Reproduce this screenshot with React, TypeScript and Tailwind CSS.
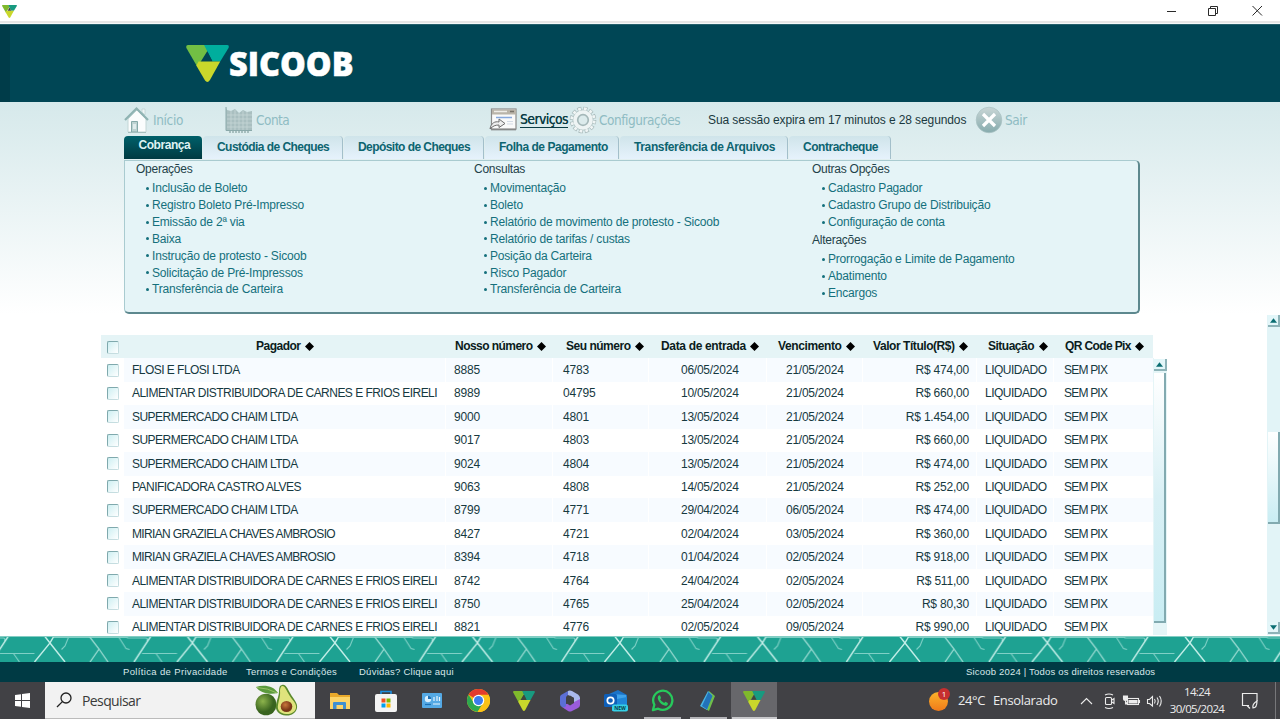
import type { ReactNode } from 'react';

const tabs = [
  { label: 'Custódia de Cheques', cls: 'w-[140px] tracking-[-0.55px]' },
  { label: 'Depósito de Cheques', cls: 'w-[140px] tracking-[-0.56px]' },
  { label: 'Folha de Pagamento', cls: 'w-[134px] tracking-[-0.47px]' },
  { label: 'Transferência de Arquivos', cls: 'w-[168px] tracking-[-0.37px]' },
  { label: 'Contracheque', cls: 'w-[102px] tracking-[-0.47px]' },
];

const operacoes = [
  'Inclusão de Boleto',
  'Registro Boleto Pré-Impresso',
  'Emissão de 2ª via',
  'Baixa',
  'Instrução de protesto - Sicoob',
  'Solicitação de Pré-Impressos',
  'Transferência de Carteira',
];
const consultas = [
  'Movimentação',
  'Boleto',
  'Relatório de movimento de protesto - Sicoob',
  'Relatório de tarifas / custas',
  'Posição da Carteira',
  'Risco Pagador',
  'Transferência de Carteira',
];
const outras = ['Cadastro Pagador', 'Cadastro Grupo de Distribuição', 'Configuração de conta'];
const alteracoes = ['Prorrogação e Limite de Pagamento', 'Abatimento', 'Encargos'];

const headers = [
  { label: 'Pagador', cls: 'pl-[132px] tracking-[-0.5px]' },
  { label: 'Nosso número', cls: 'pl-[9px] tracking-[-0.54px]' },
  { label: 'Seu número', cls: 'pl-[13px] tracking-[-0.48px]' },
  { label: 'Data de entrada', cls: 'pl-[12px] tracking-[-0.34px]' },
  { label: 'Vencimento', cls: 'pl-[11px] tracking-[-0.38px]' },
  { label: 'Valor Título(R$)', cls: 'pl-[10px] tracking-[-0.44px]' },
  { label: 'Situação', cls: 'pl-[11px] tracking-[-0.5px]' },
  { label: 'QR Code Pix', cls: 'pl-[11px] tracking-[-0.63px]' },
];

const rows = [
  ['FLOSI E FLOSI LTDA', '8885', '4783', '06/05/2024', '21/05/2024', 'R$ 474,00'],
  ['ALIMENTAR DISTRIBUIDORA DE CARNES E FRIOS EIRELI', '8989', '04795', '10/05/2024', '21/05/2024', 'R$ 660,00'],
  ['SUPERMERCADO CHAIM LTDA', '9000', '4801', '13/05/2024', '21/05/2024', 'R$ 1.454,00'],
  ['SUPERMERCADO CHAIM LTDA', '9017', '4803', '13/05/2024', '21/05/2024', 'R$ 660,00'],
  ['SUPERMERCADO CHAIM LTDA', '9024', '4804', '13/05/2024', '21/05/2024', 'R$ 474,00'],
  ['PANIFICADORA CASTRO ALVES', '9063', '4808', '14/05/2024', '21/05/2024', 'R$ 252,00'],
  ['SUPERMERCADO CHAIM LTDA', '8799', '4771', '29/04/2024', '06/05/2024', 'R$ 474,00'],
  ['MIRIAN GRAZIELA CHAVES AMBROSIO', '8427', '4721', '02/04/2024', '03/05/2024', 'R$ 360,00'],
  ['MIRIAN GRAZIELA CHAVES AMBROSIO', '8394', '4718', '01/04/2024', '02/05/2024', 'R$ 918,00'],
  ['ALIMENTAR DISTRIBUIDORA DE CARNES E FRIOS EIRELI', '8742', '4764', '24/04/2024', '02/05/2024', 'R$ 511,00'],
  ['ALIMENTAR DISTRIBUIDORA DE CARNES E FRIOS EIRELI', '8750', '4765', '25/04/2024', '02/05/2024', 'R$ 80,30'],
  ['ALIMENTAR DISTRIBUIDORA DE CARNES E FRIOS EIRELI', '8821', '4776', '02/05/2024', '09/05/2024', 'R$ 990,00'],
];

const gridCols = 'grid grid-cols-[23px_322px_107px_96px_118px_96px_114px_77px_99px]';

function Mark({ className, soft }: { className: string; soft?: boolean }) {
  return (
    <svg viewBox="0 0 44 38" className={className} preserveAspectRatio="none">
      <path d="M2 0H19.500L22 6 12 22 10.800 21 0.400 3Q-.4 0 2 0Z" fill={soft ? '#7fb92c' : '#72bf44'} />
      <path d="M18.500 0H42Q44.600 0 43.500 3L35 17H27L22 7Z" fill={soft ? '#189a80' : '#00ae9d'} />
      <path d="M12.800 17H35L24.500 36Q22 39.500 19.500 36.500L10.500 21Z" fill="#c9d72b" />
      <path d="M22 7L27 16.500H16.500Z" fill={soft ? '#40483a' : '#004655'} />
    </svg>
  );
}

function Check() {
  return (
    <span className="block h-[13px] w-3 rounded-[2px] border border-[#c5dde0] border-t-[#7fa9ad] border-l-[#7fa9ad] bg-linear-to-br from-[#cdeff2] to-white" />
  );
}

function Menu({ title, items }: { title: string; items: string[] }) {
  return (
    <div>
      <div className="h-[18px] leading-[17px] tracking-[-0.25px] text-[#1f4249]">{title}</div>
      <ul className="pt-px pl-[10px] text-[#14707c]">
        {items.map((i) => (
          <li key={i} className="flex h-[16.85px] items-center whitespace-nowrap">
            <span className="mr-[3px] size-[3px] rounded-full bg-[#14707c]" />
            <span className="leading-[16px] tracking-[-0.19px]">{i}</span>
          </li>
        ))}
      </ul>
    </div>
  );
}

function Arrow({ down }: { down?: boolean }) {
  return (
    <div className="flex h-[12px] w-full shrink-0 items-center justify-center border-r-2 border-b-2 border-[#8db3b8] bg-[#e3f6f9]">
      <svg viewBox="0 0 6 4" className="h-[5px] w-[7px]">
        <path d={down ? 'M0 0H6L3 4Z' : 'M0 4H6L3 0Z'} fill="#0b6d72" />
      </svg>
    </div>
  );
}

function Pattern() {
  return (
    <svg className="block h-[26px] w-full shrink-0" viewBox="0 0 1280 26">
      <defs>
        <pattern id="tri" width="142.5" height="26" x="50" patternUnits="userSpaceOnUse">
          <rect width="143" height="26" fill="#1ea292" />
          <g fill="none" stroke="#7fd0c6" strokeWidth="1.100">
            <path d="M4 1.500H17M19 0 15 10 11.500 13.500M68 0 76 12.500 79.500 13.500M77 2H96Q98 2 97 5M92 17.500H127M106 17.500 112 26M17 1.500H78" />
          </g>
          <g fill="none" stroke="#c3eee8" strokeWidth="1.400">
            <path d="M0 7 15 26M142.500 7 127 26M0 7 4 0M142.500 7 137 0M101 0 84 26" />
          </g>
          <path d="M39 0 49 13 40 26M49 13 58 26" fill="none" stroke="#98dad1" strokeWidth="1.300" />
        </pattern>
      </defs>
      <rect width="1280" height="26" fill="url(#tri)" />
      <path d="M0 .5H1280" stroke="#83cdc3" />
    </svg>
  );
}

function HouseIcon() {
  return (
    <svg viewBox="0 0 26 28" className="h-7 w-[26px]">
      <path d="M4 13 13 4 22 13V26H4Z" fill="#fbfdfd" stroke="#c3d6d6" />
      <path d="M18 3h3v6l-3-3z" fill="#eef5f5" stroke="#b9cfcf" strokeWidth=".7" />
      <path d="M1 14 12.500 2.500 24 14" fill="none" stroke="#8fb3b2" strokeWidth="2.200" />
      <path d="M7.500 15.500h6V26h-6z" fill="#bdd2d1" stroke="#86a9a8" />
      <path d="M9 18h3v5H9z" fill="#e0ecec" />
      <path d="M4 26.500h18" stroke="#a5bfbe" />
    </svg>
  );
}

function ChartIcon() {
  return (
    <svg viewBox="0 0 28 28" className="h-7 w-7">
      <path d="M1 1V24H27V5L22 6 18 4 14 7 10 3 6 5 2 4Z" fill="#a9bfc0" />
      <path d="M2 9H27M2 13H27M2 17H27M2 21H27M6 5V24M10 4V24M14 7V24M18 5V24M22 6V24" stroke="#c7d7d7" strokeWidth=".8" />
      <path d="M1 1V24.500H27" stroke="#8aa9aa" fill="none" />
      <path d="M5 25v2M8 25v2M11 25v2M14 25v2M17 25v2M20 25v2M23 25v2" stroke="#94afaf" strokeWidth="1.500" />
    </svg>
  );
}

function ServiceIcon() {
  return (
    <svg viewBox="0 0 28 23" className="h-[23px] w-7">
      <rect x="2.500" y="1" width="24.500" height="20" fill="#fafafa" stroke="#8b8b8b" strokeWidth="1.200" />
      <path d="M3 1.500h24v5H3z" fill="#b9b4a9" />
      <path d="M5 3.500h13" stroke="#efede8" strokeWidth="1.500" />
      <path d="M21 3.500h4" stroke="#77736a" strokeWidth="1.500" />
      <path d="M7 9.500h16" stroke="#86a8dd" strokeWidth="1.500" />
      <path d="M18 13.500h6M18 16h6" stroke="#d3dbe6" />
      <path d="M1 21C2 15 6 13 10 14V11L16 15.500 10 19.500V17C6 17 4 18 1 21Z" fill="#eee" stroke="#6e6e6e" />
      <path d="M2 21.800h25" stroke="#777" />
    </svg>
  );
}

function GearIcon() {
  return (
    <svg viewBox="0 0 28 28" className="h-7 w-7">
      <circle cx="14" cy="14" r="11.300" fill="none" stroke="#a3b6b7" strokeWidth="4" strokeDasharray="4 1.917" />
      <circle cx="14" cy="14" r="10.200" fill="#eef4f4" stroke="#a9bcbd" strokeWidth=".8" />
      <circle cx="14" cy="14" r="11.300" fill="none" stroke="#f0f5f5" strokeWidth="2.800" strokeDasharray="2.800 3.117" strokeDashoffset="-.6" />
      <circle cx="14" cy="14" r="5.300" fill="#dcebec" stroke="#a5b8b9" strokeWidth="1.700" />
    </svg>
  );
}

function ExitIcon() {
  return (
    <svg viewBox="0 0 28 28" className="h-7 w-7">
      <defs>
        <linearGradient id="ex" x1="0" y1="0" x2="0" y2="1">
          <stop offset="0" stopColor="#c9d6d6" />
          <stop offset="1" stopColor="#86abad" />
        </linearGradient>
      </defs>
      <circle cx="14" cy="14" r="12.800" fill="url(#ex)" stroke="#a9c2c3" strokeWidth=".7" />
      <path d="M8 8 20 20M20 8 8 20" stroke="#fff" strokeWidth="3.200" />
    </svg>
  );
}

function NavLink({ icon, label, cls, text }: { icon: ReactNode; label: string; cls: string; text: string }) {
  return (
    <div className={`flex shrink-0 items-center ${cls}`}>
      {icon}
      <span className={`font-['DejaVu_Sans_Condensed','DejaVu_Sans',sans-serif] text-[13.5px] leading-4 [font-stretch:condensed] ${text}`}>{label}</span>
    </div>
  );
}

function Avocado() {
  return (
    <svg viewBox="0 0 44 32" className="h-8 w-11">
      <defs>
        <radialGradient id="av" cx=".35" cy=".35">
          <stop offset="0" stopColor="#8db44c" />
          <stop offset="1" stopColor="#39631f" />
        </radialGradient>
        <radialGradient id="pit" cx=".4" cy=".35">
          <stop offset="0" stopColor="#c9773b" />
          <stop offset="1" stopColor="#7a3717" />
        </radialGradient>
      </defs>
      <ellipse cx="11" cy="20.500" rx="10.500" ry="10.800" fill="url(#av)" />
      <path d="M1 3C9 0 19 2 23 9 14 11 5 9 1 3Z" fill="#5c9a3d" />
      <path d="M2 3.500Q13 4 22 9" stroke="#a6cc6e" fill="none" strokeWidth=".8" />
      <path d="M27 1C31 0 32 4 35 9 39 16 43 19 42 24 41 29 36 32 31 31.500 24 31 20 27 21 21 22 15 24 12 24 7 24 3 25 1 27 1Z" fill="#5c8a2c" />
      <path d="M27.500 2C30 2 31 6 34.500 11.500 38 17 42 20 41 24 40 28.500 35 30.500 31 30 25 29.500 22 26 23 21 24 15 25.500 12 25 7 25 4 26 2 27.500 2Z" fill="#dfe37c" />
      <ellipse cx="31.500" cy="22.500" rx="5.800" ry="5.500" fill="url(#pit)" />
    </svg>
  );
}

function TaskSlot({ children, active, open }: { children: ReactNode; active?: boolean; open?: boolean }) {
  return (
    <div className={`flex h-full w-[46px] shrink-0 flex-col items-center ${active ? 'bg-[#67676b]' : ''}`}>
      <div className="flex h-[35px] w-full items-center justify-center pt-[2px]">{children}</div>
      <div className={`mt-auto h-[2px] ${active ? 'w-[45px] bg-[#c9c9cc]' : open ? 'w-[37px] bg-[#b4b4b8]' : 'w-0'}`} />
    </div>
  );
}

export default function App() {
  return (
    <div className="flex h-[719px] w-[1280px] flex-col overflow-hidden bg-white font-['Liberation_Sans',Arial,sans-serif] text-[12px]">
      <div className="flex h-[21px] shrink-0 items-center justify-between pr-[16px] pl-[2px]">
        <Mark soft className="mt-px h-[13px] w-[15px]" />
        <svg viewBox="0 0 98 12" className="h-3 w-[98px]" fill="none" stroke="#2a2a2a" strokeWidth="1">
          <path d="M1 6.500H10M86.500 1 96 10.500M96 1 86.500 10.500" />
          <path d="M42.500 3.500H49.500V10.500H42.500ZM44.500 3V1.500H51.500V8.500H50" />
        </svg>
      </div>
      <div className="h-[3px] shrink-0 border-t-2 border-[#e6e6e6] bg-[#f5f9fa]" />
      <header className="flex h-[78px] shrink-0 border-t border-[#25606c] bg-[#004655]">
        <div className="w-[10px] bg-[#003c49]" />
        <div className="pt-5 pl-[176px]">
          <Mark className="h-[37px] w-[43px]" />
        </div>
        <svg className="h-[60px] w-[132px]" viewBox="0 0 132 60">
          <text x="0" y="50.800" textLength="124.500" lengthAdjust="spacingAndGlyphs" fill="#fff" stroke="#fff" strokeWidth=".5" className="font-['Open_Sans',sans-serif] text-[34px] font-extrabold">SICOOB</text>
        </svg>
      </header>

      <main className="flex h-[534px] shrink-0 justify-between bg-linear-to-b from-[#d6e9eb] to-white to-[212px]">
        <div className="w-[1168px]">
          <nav className="flex h-[34px] items-center pt-px pl-[124px]">
            <NavLink icon={<HouseIcon />} label="Início" cls="w-[101px] gap-[3px]" text="text-[#8fbcc3] tracking-[-0.35px]" />
            <NavLink icon={<ChartIcon />} label="Conta" cls="w-[264px] gap-[3px]" text="text-[#8fbcc3] tracking-[-0.5px]" />
            <NavLink icon={<ServiceIcon />} label="Serviços" cls="w-[80px] gap-[3px]" text="text-[#0a3c44] tracking-[-0.4px] border-b border-[#0a3c44] [text-shadow:0.3px_0_0_#0a3c44]" />
            <NavLink icon={<GearIcon />} label="Configurações" cls="w-[139px] gap-[2px]" text="text-[#8fbcc3] tracking-[-0.45px]" />
            <div className="w-[267px] shrink-0 whitespace-nowrap tracking-[-0.1px] text-[#1a3940]">Sua sessão expira em 17 minutos e 28 segundos</div>
            <NavLink icon={<ExitIcon />} label="Sair" cls="gap-[2px]" text="text-[#8fbcc3] tracking-[-0.4px]" />
          </nav>

          <div className="flex h-[24px] gap-[1px] pl-[124px] font-bold text-[#0d6470]">
            <div className="h-[23px] w-[78px] rounded-t-[4px] bg-linear-to-b from-[#00606a] to-[#003a42] pl-[14.5px] leading-[19px] tracking-[-0.45px] text-[#dff2f3]">
              Cobrança
            </div>
            {tabs.map((t) => (
              <div key={t.label} className={`h-[23px] shrink-0 rounded-t-[4px] border-r border-[#a3bfca] bg-linear-to-b from-[#cfe4ea] to-[#e6f2fc] pl-[14px] leading-[22px] whitespace-nowrap ${t.cls}`}>
                {t.label}
              </div>
            ))}
          </div>

          <section className="ml-[124px] grid h-[154px] w-[1016px] grid-cols-[338px_338px_1fr] rounded-r-[5px] rounded-bl-[5px] border border-r-2 border-b-2 border-[#a9cbd0] border-r-[#5d888e] border-b-[#5d888e] bg-[#e5f4f7] pt-0 pl-[11px]">
            <Menu title="Operações" items={operacoes} />
            <Menu title="Consultas" items={consultas} />
            <div>
              <Menu title="Outras Opções" items={outras} />
              <div className="h-[1.5px]" />
              <Menu title="Alterações" items={alteracoes} />
            </div>
          </section>

          <section className="mt-[21px] ml-[101px] h-[300px] overflow-hidden">
            <div className={`${gridCols} h-[23px] w-[1052px] items-center bg-[#e5f4f6] font-bold text-[#0b1c20]`}>
              <div className="pt-px pl-[6px]"><Check /></div>
              {headers.map((h) => (
                <div key={h.label} className={`flex items-center gap-[4.5px] pb-px whitespace-nowrap ${h.cls}`}>
                  <span className="leading-[20px]">{h.label}</span>
                  <svg viewBox="0 0 8 8" className="size-[9px]"><path d="M4 0 8 4 4 8 0 4Z" fill="#000" /></svg>
                </div>
              ))}
            </div>
            <div className="flex">
              <div className="w-[1052px] shrink-0 text-[#16393f]">
                {rows.map((r, i) => {
                  const bg = i % 2 ? '' : 'bg-[#f7fbff]';
                  const fit = r[0].startsWith('MIRIAN') ? 'tracking-[-0.65px]' : 'tracking-[-0.53px]';
                  return (
                    <div key={r[1]} className={`${gridCols} h-[23.4px] items-center leading-[24px] whitespace-nowrap`}>
                      <div className="pl-[6px]"><Check /></div>
                      <div className={`h-full border-r border-white pl-2 ${fit} ${bg}`}>{r[0]}</div>
                      <div className={`h-full border-r border-white pl-2 tracking-[-0.2px] ${bg}`}>{r[1]}</div>
                      <div className={`h-full border-r border-white pl-[10px] tracking-[-0.2px] ${bg}`}>{r[2]}</div>
                      <div className={`h-full border-r border-white pl-[32px] tracking-[-0.25px] ${bg}`}>{r[3]}</div>
                      <div className={`h-full border-r border-white pl-[19px] tracking-[-0.25px] ${bg}`}>{r[4]}</div>
                      <div className={`h-full border-r border-white pr-[7px] text-right tracking-[-0.2px] ${bg}`}>{r[5]}</div>
                      <div className={`h-full border-r border-white pl-[8px] tracking-[-0.5px] ${bg}`}>LIQUIDADO</div>
                      <div className={`h-full pl-[10px] tracking-[-0.8px] ${bg}`}>SEM PIX</div>
                    </div>
                  );
                })}
              </div>
              <div className="flex h-[277px] w-[14px] flex-col bg-[#e5f5f7] pl-px">
                <div className="h-px bg-white" />
                <Arrow />
                <div className="mt-[2px] h-[250px] w-[12px] border-r-2 border-b-2 border-[#82aab0] bg-linear-to-b from-white via-[#d9f0f5] to-[#c9edf3]" />
              </div>
            </div>
          </section>
        </div>

        <div className="mt-[213px] flex h-[320px] w-[13px] flex-col bg-[#e2f4f7] pl-px">
          <Arrow />
          <div className="mt-[105px] h-[92px] w-[12px] border-r-2 border-b-2 border-[#82aab0] bg-linear-to-b from-white to-[#c9edf3]" />
          <div className="mt-auto pb-px"><Arrow down /></div>
        </div>
      </main>

      <Pattern />
      <footer className="flex h-[20px] shrink-0 items-center bg-[#003a44] pl-[123px] text-[9.5px] whitespace-nowrap text-[#d8e8ea]">
        <span className="w-[123px] tracking-[0.35px]">Política de Privacidade</span>
        <span className="w-[113px] tracking-[0.25px]">Termos e Condições</span>
        <span className="w-[607px] tracking-[0.25px]">Dúvidas? Clique aqui</span>
        <span className="tracking-[0.19px]">Sicoob 2024 | Todos os direitos reservados</span>
      </footer>

      <div className="flex h-[37px] shrink-0 items-center bg-[#414145] font-['Open_Sans','Noto_Sans',sans-serif] text-[13px] text-[#ececec]">
        <div className="flex h-full w-[45px] shrink-0 items-center justify-center">
          <svg viewBox="0 0 15 15" className="size-[15px]" fill="#fff"><path d="M0 2 6 1.200V7H0ZM7 1 15 0V7H7ZM0 8H6V13.800L0 13ZM7 8H15V15L7 14Z" /></svg>
        </div>
        <div className="flex h-full w-[270px] shrink-0 items-center border-b border-[#bbb] bg-[#f2f2f2]">
          <svg viewBox="0 0 16 16" className="ml-[11px] size-4" fill="none" stroke="#222" strokeWidth="1.300">
            <circle cx="10" cy="6" r="5" /><path d="M6.400 9.600 1 15" />
          </svg>
          <span className="ml-[10px] w-[127px] text-[14px] tracking-[-0.6px] text-[#3a3a3a]">Pesquisar</span>
          <span className="ml-[46px] shrink-0"><Avocado /></span>
        </div>
        <div className="flex h-full w-[461px] shrink-0 pl-[2px]">
          <TaskSlot>
            <svg viewBox="0 0 20 18" className="h-[18px] w-5"><path d="M0 1H7L9 3H20V17H0Z" fill="#e9a92b" /><path d="M0 5H20V17H0Z" fill="#fcd468" /><path d="M3 17V11Q3 10 4 10H15Q16 10 16 11V17H13V13H6.500V17Z" fill="#3f8fd0" /></svg>
          </TaskSlot>
          <TaskSlot>
            <svg viewBox="0 0 22 22" className="size-[22px]"><path d="M6 5V1.500H16V5" fill="none" stroke="#1d8fe0" strokeWidth="1.600" /><rect y="4" width="22" height="18" rx="2" fill="#f4f4f4" /><path d="M6.500 8.500h4v4h-4z" fill="#f05022" /><path d="M11.500 8.500h4v4h-4z" fill="#7db900" /><path d="M6.500 13.500h4v4h-4z" fill="#00a1ef" /><path d="M11.500 13.500h4v4h-4z" fill="#ffb901" /></svg>
          </TaskSlot>
          <TaskSlot>
            <svg viewBox="0 0 20 15" className="h-[15px] w-5"><rect width="20" height="15" rx="1" fill="#54a9e5" /><circle cx="6" cy="6" r="3.200" fill="#d8efff" /><path d="M6 6V2.800A3.200 3.200 0 0 1 9.200 6Z" fill="#1b6fb5" /><path d="M12 4v4M15 3v5M17.500 4v4M11 11h7" stroke="#e8f6ff" strokeWidth="1.200" /><path d="M3 11.500h6" stroke="#1b6fb5" strokeWidth="1.200" /></svg>
          </TaskSlot>
          <TaskSlot>
            <svg viewBox="0 0 24 24" className="size-[23px]"><circle cx="12" cy="12" r="12" fill="#fbc116" /><path d="M12 12 1.600 6A12 12 0 0 1 22.400 6Z" fill="#e33b2e" /><path d="M1.600 6A12 12 0 0 0 11 24L16.700 14.700 12 12 7 14Z" fill="#2da94f" /><path d="M12 6H22.400A12 12 0 0 1 11 24L17 15Z" fill="#fbc116" /><circle cx="12" cy="12" r="6" fill="#fff" /><circle cx="12" cy="12" r="4.700" fill="#3b7ded" /></svg>
          </TaskSlot>
          <TaskSlot><Mark soft className="h-5 w-[22px]" /></TaskSlot>
          <TaskSlot>
            <svg viewBox="0 0 20 22" className="h-[22px] w-5"><path d="M8 1 1 5Q0 6 0 7V14Q0 16 2 17L6 19V8Q6 6 8 5L12 2Q10 0 8 1Z" fill="#5b6fd6" /><path d="M8 1Q10 0 12 1L18 4.500Q20 6 20 8V15L14 12V8L8 5Z" fill="#a9b9ec" /><path d="M6 14 14 12 20 9V15Q20 17 18 18L12 21Q10 22 8 21L2 17Q5 18 6 16Z" fill="#9a5cdc" /><path d="M10 5.500 14 8V13L10 15.500 6 13V8Z" fill="#414145" /></svg>
          </TaskSlot>
          <TaskSlot>
            <svg viewBox="0 0 24 22" className="h-[22px] w-6"><path d="M5 4 14 0 23 5V17H5Z" fill="#1b73c8" /><path d="M8 4 22 5 23 16 8 18Z" fill="#3fa2ea" /><path d="M8 10 23 7V20Q23 21 22 21H8Z" fill="#1f86d9" /><rect y="4" width="13" height="13" rx="1.500" fill="#0f5fb8" /><circle cx="6.500" cy="10.500" r="3.200" fill="none" stroke="#fff" strokeWidth="1.700" /><rect x="8" y="14.500" width="16" height="7" rx="2" fill="#35d0e6" /><text x="16" y="20" textAnchor="middle" className="text-[5px] font-bold" fill="#063b4a">NEW</text></svg>
          </TaskSlot>
          <TaskSlot open>
            <svg viewBox="0 0 24 24" className="size-[23px]"><path d="M2 22 3.500 16.500A10 10 0 1 1 7.500 20.500Z" fill="none" stroke="#27c95c" strokeWidth="2.400" strokeLinejoin="round" /><path d="M8.500 6.500Q7 7 7 9.500C7.500 13 11 17 15 17.500 17 17.500 18 16 17.500 14.500L15 13.200 13.800 14.700Q11 13.500 9.500 10.800L10.500 9.500 9.500 6.700Z" fill="#27c95c" /></svg>
          </TaskSlot>
          <TaskSlot open>
            <svg viewBox="0 0 16 20" className="h-5 w-4"><path d="M9 0 15 5 9 20 4 17Z" fill="#6fbe4a" /><path d="M8 0 12 4 7 19 0 15Z" fill="#49b5e4" /><path d="M8.500 1 12.500 5 7 18.500 2 15Z" fill="#2272b8" /></svg>
          </TaskSlot>
          <TaskSlot active><Mark soft className="h-5 w-[22px]" /></TaskSlot>
        </div>
        <div className="ml-[153px] flex shrink-0 items-center">
          <div className="relative size-[22px]">
            <span className="absolute top-[2px] left-0 size-[19px] rounded-full bg-linear-to-b from-[#fbb22a] to-[#ef7a1a]" />
            <span className="absolute top-[-2px] left-[9px] flex size-[12px] items-center justify-center rounded-full bg-[#c62f2f] text-[8px] leading-none text-white">1</span>
          </div>
        </div>
        <span className="ml-[7px] w-[35px] shrink-0 tracking-[-0.4px]">24°C</span>
        <span className="w-[87px] shrink-0 tracking-[-0.35px]">Ensolarado</span>
        <svg viewBox="0 0 84 18" className="h-[18px] w-[84px] shrink-0" fill="none" stroke="#ececec" strokeWidth="1.100">
          <path d="M1 12 6.500 6.500 12 12" />
          <rect x="25.500" y="5.500" width="6" height="7" rx="1" /><path d="M32 8 34 6.500V11.500L32 10M25 3Q29 1 33 3M25 15.500Q29 17.500 33 15.500" />
          <rect x="47.500" y="6.500" width="11" height="6" /><path d="M49 8.500H57V11H49Z" fill="#ececec" /><path d="M43.500 4V7Q43.500 8.500 45.500 8.500T47.500 7V4ZM45.500 8.500V12H48" fill="#ececec" /><path d="M59.500 8V11" />
          <path d="M67.500 7.500H69.500L72.500 4.500V14L69.500 11.500H67.500ZM74.500 7Q76 9 74.500 11.500M77 5.500Q79.500 9 77 13M79.500 4Q83 9 79.500 14.500" />
        </svg>
        <div className="mb-[2px] ml-[2px] w-[62px] shrink-0 text-center text-[11.5px] leading-[17px] tracking-[-0.65px] whitespace-nowrap">
          <div>14:24</div>
          <div>30/05/2024</div>
        </div>
        <svg viewBox="0 0 18 18" className="ml-[13px] size-[18px] shrink-0" fill="none" stroke="#ececec" strokeWidth="1.200">
          <path d="M8 13.500H5L1.500 13.500V1.500H16V9M6 13.500 9 16.500" /><path d="M16 9Q11 12 12 16 16 16 16 9Z" />
        </svg>
        <div className="ml-[16px] h-full w-px bg-[#77777a]" />
      </div>
    </div>
  );
}
